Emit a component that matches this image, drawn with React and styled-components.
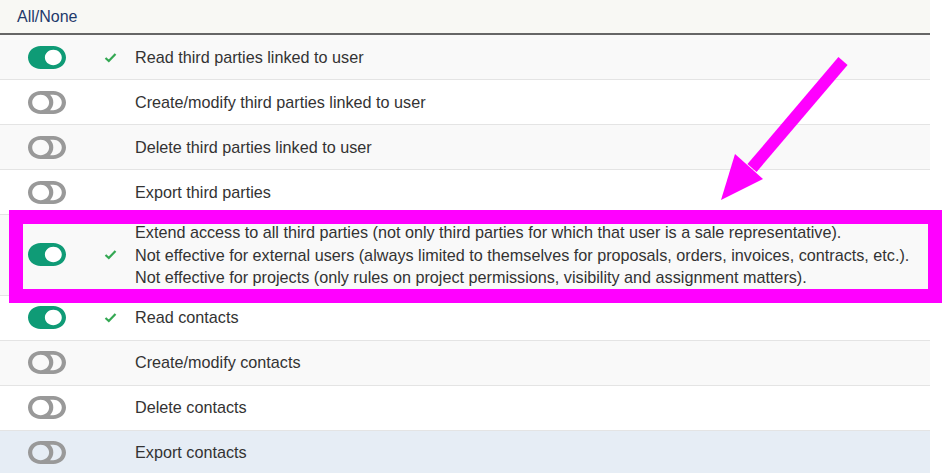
import React from "react";
import styled, { createGlobalStyle } from "styled-components";

const Global = createGlobalStyle`
  html, body { margin: 0; padding: 0; background: #fff; }
  body { font-family: "Liberation Sans", Arial, sans-serif; }
`;

const Page = styled.div`
  position: relative;
  width: 946px;
  height: 473px;
  overflow: hidden;
  background: #fff;
`;

const Table = styled.div`
  width: 930px;
  display: flex;
  flex-direction: column;
`;

const Header = styled.div`
  height: 33px;
  display: flex;
  align-items: center;
  padding-left: 17px;
  background: #f8f8f4;
  border-bottom: 2px solid #666;
  font-size: 16px;
  color: #1f3a6b;
`;

const Row = styled.div`
  display: grid;
  grid-template-columns: 104px 31px 1fr;
  align-items: center;
  min-height: 45px;
  padding: 6px 0;
  box-sizing: border-box;
  border-bottom: 1px solid #e4e4e4;
  background: ${(p) => (p.$hover ? "#e6edf5" : p.$odd ? "#f9f9f9" : "#fff")};
`;

const ToggleCell = styled.div`
  padding-left: 28px;
  display: flex;
  align-items: center;
`;

const CheckCell = styled.div`
  display: flex;
  align-items: center;
`;

const Label = styled.div`
  font-size: 16.2px;
  line-height: 22.6px;
  color: #333;
`;

const Overlay = styled.svg`
  position: absolute;
  left: 0;
  top: 0;
  pointer-events: none;
`;

const ON =
  "M384 64H192C86 64 0 150 0 256s86 192 192 192h192c106 0 192-86 192-192S490 64 384 64zm0 320c-70.8 0-128-57.3-128-128 0-70.8 57.3-128 128-128 70.8 0 128 57.3 128 128 0 70.8-57.3 128-128 128z";
const OFF =
  "M384 64H192C85.961 64 0 149.961 0 256s85.961 192 192 192h192c106.039 0 192-85.961 192-192S490.039 64 384 64zM64 256c0-70.741 57.249-128 128-128 70.741 0 128 57.249 128 128 0 70.741-57.249 128-128 128-70.741 0-128-57.249-128-128zm320 128h-48.905c65.217-72.858 65.236-183.12 0-256H384c70.595 0 128 57.41 128 128 0 70.595-57.41 128-128 128z";

function Toggle({ on }) {
  return (
    <svg width="38" height="23" viewBox="0 64 576 384" preserveAspectRatio="none">
      {on && <circle cx="384" cy="256" r="130" fill="#fff" />}
      <path d={on ? ON : OFF} fill={on ? "#0f9b76" : "#999"} />
    </svg>
  );
}

function Check() {
  return (
    <svg width="13" height="11" viewBox="0 0 13 11">
      <path d="M1.5 6 L4.8 9 L11.5 2" fill="none" stroke="#34a853" strokeWidth="2.2" />
    </svg>
  );
}

const rows = [
  { on: true, text: ["Read third parties linked to user"] },
  { on: false, text: ["Create/modify third parties linked to user"] },
  { on: false, text: ["Delete third parties linked to user"] },
  { on: false, text: ["Export third parties"] },
  {
    on: true,
    text: [
      "Extend access to all third parties (not only third parties for which that user is a sale representative).",
      "Not effective for external users (always limited to themselves for proposals, orders, invoices, contracts, etc.).",
      "Not effective for projects (only rules on project permissions, visibility and assignment matters).",
    ],
  },
  { on: true, text: ["Read contacts"] },
  { on: false, text: ["Create/modify contacts"] },
  { on: false, text: ["Delete contacts"] },
  { on: false, text: ["Export contacts"], hover: true },
];

export default function App() {
  return (
    <Page>
      <Global />
      <Table>
        <Header>All/None</Header>
        {rows.map((r, i) => (
          <Row key={i} $odd={i % 2 === 0} $hover={r.hover}>
            <ToggleCell>
              <Toggle on={r.on} />
            </ToggleCell>
            <CheckCell>{r.on && <Check />}</CheckCell>
            <Label>
              {r.text.map((t, j) => (
                <div key={j}>{t}</div>
              ))}
            </Label>
          </Row>
        ))}
      </Table>
      <Overlay width="946" height="473" viewBox="0 0 946 473">
        <rect x="16" y="217" width="919" height="79" fill="none" stroke="#ff00ff" strokeWidth="14" />
        <line x1="843" y1="61" x2="752" y2="168" stroke="#ff00ff" strokeWidth="12" />
        <polygon points="721,200 735,154 763,179" fill="#ff00ff" />
      </Overlay>
    </Page>
  );
}
